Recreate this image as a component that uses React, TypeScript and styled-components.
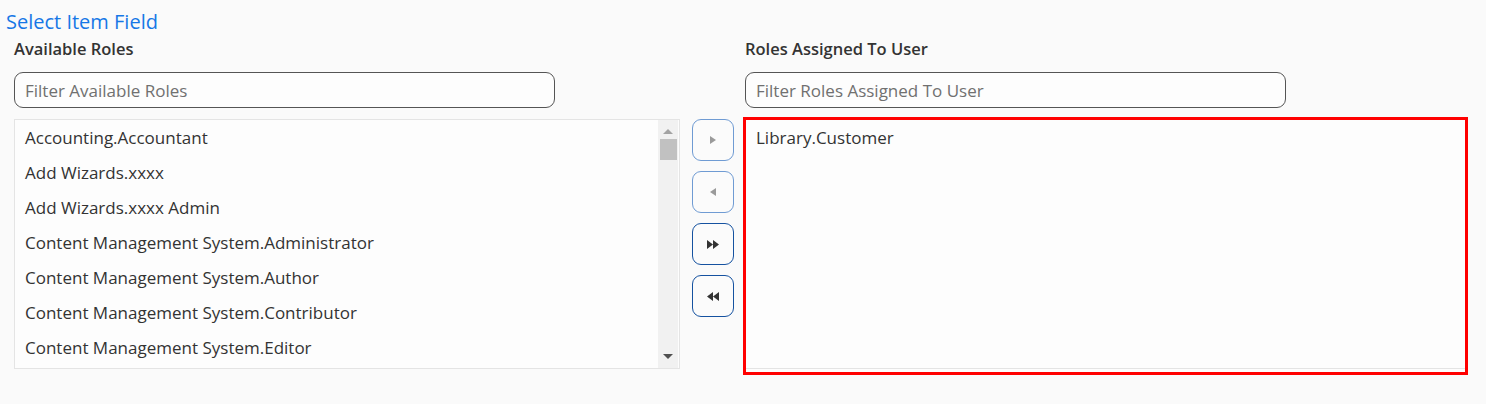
import styled, { createGlobalStyle } from "styled-components";

const GlobalStyle = createGlobalStyle`
  html, body {
    margin: 0;
    padding: 0;
    background: #fafafa;
    font-family: "Open Sans", "Noto Sans", sans-serif;
    color: #333;
  }
`;

const Page = styled.div`
  padding: 10px 18px 0 6px;
`;

const Title = styled.h1`
  margin: 0;
  font-size: 20px;
  font-weight: 400;
  line-height: 24px;
  color: #1677e6;
`;

const Layout = styled.div`
  display: grid;
  grid-template-columns: 666px 42px 1fr;
  grid-template-rows: 22px 36px auto;
  column-gap: 12px;
  margin-top: 4px;
  padding-left: 8px;
`;

const Heading = styled.div<{ $col: number }>`
  grid-column: ${(p) => p.$col};
  grid-row: 1;
  font-size: 16.5px;
  font-weight: 600;
  line-height: 22px;
  color: #333;
  margin-left: ${(p) => (p.$col === 3 ? "-1px" : "0")};
`;

const Filter = styled.input<{ $col: number }>`
  grid-column: ${(p) => p.$col};
  grid-row: 2;
  margin-top: 12px;
  margin-left: ${(p) => (p.$col === 3 ? "-1px" : "0")};
  width: 541px;
  height: 36px;
  box-sizing: border-box;
  border: 1px solid #555;
  border-radius: 9px;
  background: #fdfdfd;
  padding: 0 10px;
  font-family: inherit;
  font-size: 17px;
  color: #333;
  outline: none;
  &::placeholder {
    color: #707070;
  }
`;

const LeftList = styled.div`
  grid-column: 1;
  grid-row: 3;
  margin-top: 23px;
  height: 250px;
  box-sizing: border-box;
  border: 1px solid #e4e4e4;
  background: #fdfdfd;
  display: flex;
`;

const Items = styled.ul`
  flex: 1;
  margin: 0;
  padding: 0 0 0 10px;
  list-style: none;
  overflow: hidden;
`;

const Item = styled.li`
  font-size: 17px;
  line-height: 35px;
  color: #333;
  white-space: nowrap;
`;

const Scrollbar = styled.div`
  width: 20px;
  margin-right: 1px;
  background: #f1f1f1;
  display: flex;
  flex-direction: column;
  align-items: center;
`;

const Arrow = styled.div<{ $up?: boolean }>`
  width: 0;
  height: 0;
  border-left: 5px solid transparent;
  border-right: 5px solid transparent;
  ${(p) =>
    p.$up
      ? "border-bottom: 5px solid #a3a3a3; margin-top: 9px;"
      : "border-top: 5px solid #505050; margin-top: auto; margin-bottom: 9px;"}
`;

const Thumb = styled.div`
  width: 17px;
  height: 21px;
  background: #c1c1c1;
  margin-top: 5px;
`;

const Buttons = styled.div`
  grid-column: 2;
  grid-row: 3;
  margin-top: 23px;
  display: flex;
  flex-direction: column;
  gap: 10px;
`;

const MoveButton = styled.button<{ $enabled?: boolean }>`
  width: 42px;
  height: 42px;
  box-sizing: border-box;
  border-radius: 9px;
  border: 1px solid ${(p) => (p.$enabled ? "#1552a0" : "#6f9bd3")};
  background: #fbfbfb;
  padding: 0;
  display: flex;
  align-items: center;
  justify-content: center;
  color: ${(p) => (p.$enabled ? "#333" : "#9a9a9a")};
  cursor: pointer;
`;

const RightFrame = styled.div`
  grid-column: 3;
  grid-row: 3;
  margin-top: 21px;
  margin-left: -3px;
  height: 258px;
  box-sizing: border-box;
  border: 3px solid #ff0000;
  background: #fdfdfd;
  display: flex;
  flex-direction: column;
`;

const RightItems = styled(Items)`
  flex: 1;
  border-bottom: 1px solid #e4e4e4;
  margin-bottom: 3px;
`;

const available = [
  "Accounting.Accountant",
  "Add Wizards.xxxx",
  "Add Wizards.xxxx Admin",
  "Content Management System.Administrator",
  "Content Management System.Author",
  "Content Management System.Contributor",
  "Content Management System.Editor",
];

function Tri({ dir, double }: { dir: "r" | "l"; double?: boolean }) {
  const one = dir === "r" ? "M0 0 L6 4 L0 8 Z" : "M6 0 L0 4 L6 8 Z";
  if (!double) {
    return (
      <svg width="6" height="8" viewBox="0 0 6 8">
        <path d={one} fill="currentColor" />
      </svg>
    );
  }
  const two =
    dir === "r"
      ? "M0 0 L6 4.5 L0 9 Z M6 0 L12 4.5 L6 9 Z"
      : "M6 0 L0 4.5 L6 9 Z M12 0 L6 4.5 L12 9 Z";
  return (
    <svg width="12" height="9" viewBox="0 0 12 9">
      <path d={two} fill="currentColor" />
    </svg>
  );
}

export default function App() {
  return (
    <Page>
      <GlobalStyle />
      <Title>Select Item Field</Title>
      <Layout>
        <Heading $col={1}>Available Roles</Heading>
        <Heading $col={3}>Roles Assigned To User</Heading>
        <Filter $col={1} placeholder="Filter Available Roles" />
        <Filter $col={3} placeholder="Filter Roles Assigned To User" />
        <LeftList>
          <Items>
            {available.map((r) => (
              <Item key={r}>{r}</Item>
            ))}
          </Items>
          <Scrollbar>
            <Arrow $up />
            <Thumb />
            <Arrow />
          </Scrollbar>
        </LeftList>
        <Buttons>
          <MoveButton>
            <Tri dir="r" />
          </MoveButton>
          <MoveButton>
            <Tri dir="l" />
          </MoveButton>
          <MoveButton $enabled>
            <Tri dir="r" double />
          </MoveButton>
          <MoveButton $enabled>
            <Tri dir="l" double />
          </MoveButton>
        </Buttons>
        <RightFrame>
          <RightItems>
            <Item>Library.Customer</Item>
          </RightItems>
        </RightFrame>
      </Layout>
    </Page>
  );
}
